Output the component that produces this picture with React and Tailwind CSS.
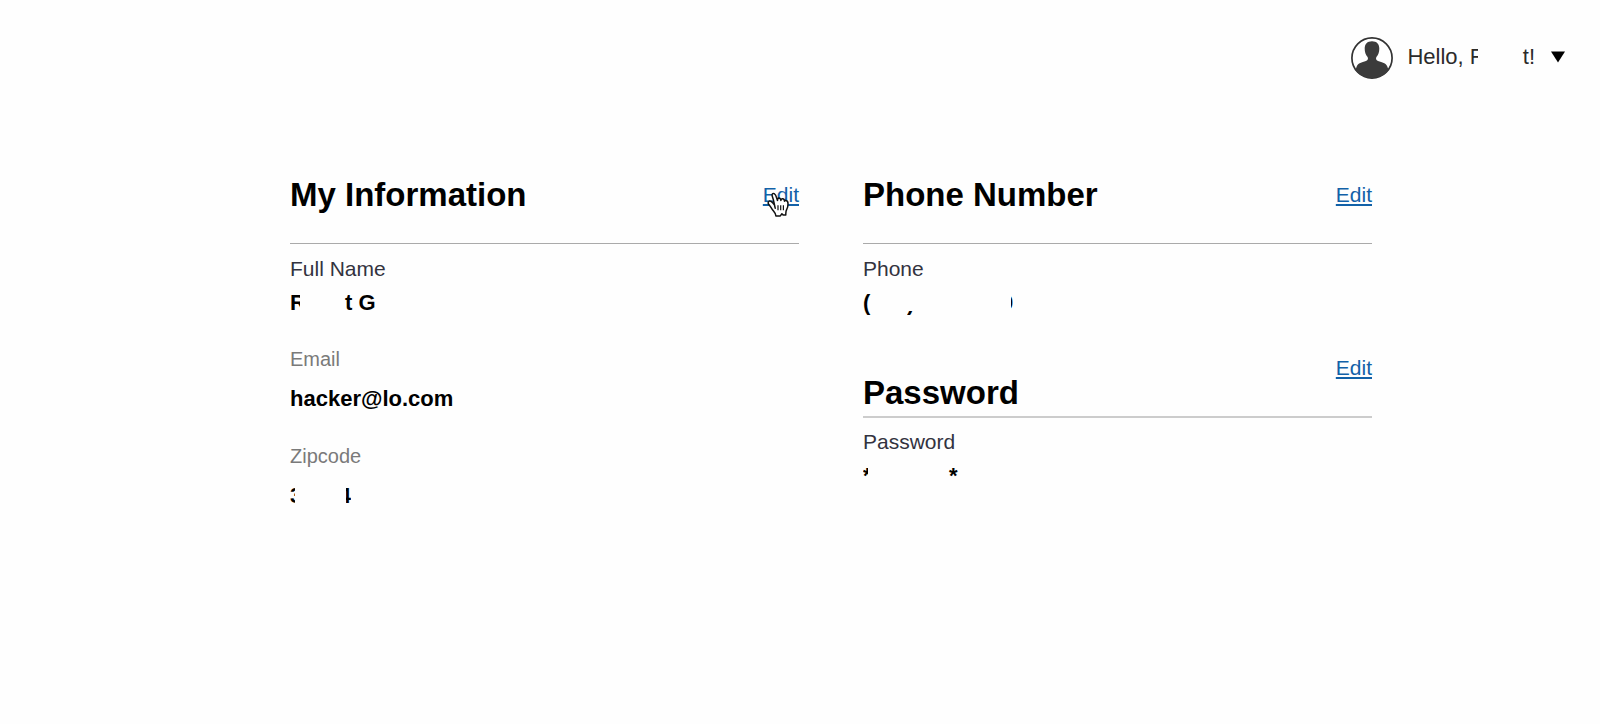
import React from "react";

function Part({ children, width, end = false }) {
  return (
    <span className={`flex shrink-0 overflow-hidden ${end ? "justify-end" : ""} ${width}`}>
      <span className="shrink-0">{children}</span>
    </span>
  );
}

function EditLink({ label, children }) {
  return (
    <span className="relative h-6">
      <a
        href="#edit"
        aria-label={label}
        className="block text-[21px] leading-6 text-[#1261a8] underline decoration-2 underline-offset-2"
      >
        Edit
      </a>
      {children}
    </span>
  );
}

function HandCursor() {
  return (
    <svg
      className="pointer-events-none absolute left-1 top-2 h-7 w-6"
      viewBox="0 0 24 28"
      aria-hidden="true"
    >
      <path
        d="M8.2 17.2 6.3 8.4Q5 4.6 5 3.8Q5.4 2 7.2 2.6Q8.8 3.4 9.6 6.7L10.5 9.4Q10.4 7 12 6.9Q13.7 7 13.9 9.5Q14.1 7.6 15.7 7.8Q17.4 8 17.5 10.3Q17.9 9.3 19.1 9.6Q21.1 10 21 12.9Q21 15.8 19.8 18.2Q18.6 20.4 18.8 23.9L16.3 24.1L14.9 22.7L13.3 24.9H8.9Q8.8 22.8 6.7 20.3Q5.1 18.4 3.8 16.1Q2.3 14.1 1.3 12.7Q.7 10.8 2.3 10.1Q4 9.7 5.9 12.1L7.5 14Z"
        fill="#fff"
        stroke="#111"
        strokeWidth="1.5"
        strokeLinejoin="round"
      />
      <path d="M11 14.3V19.2M13.7 14.3V19.2M16.4 14.3V19.2" stroke="#111" strokeWidth="1.2" />
    </svg>
  );
}

function Avatar() {
  return (
    <svg className="h-[42px] w-[42px]" viewBox="0 0 42 42" aria-hidden="true">
      <circle cx="21" cy="21" r="20.1" fill="#fff" stroke="#333" strokeWidth="1.7" />
      <path
        d="M21 4.2C16.3 4.2 13.7 7 13.7 11.4C13.7 15 14.6 17.7 16.6 20.1C17.4 21.9 17 23.3 15 24C10.6 25.4 7.2 26 5.7 29.4L4.4 33C8 38.2 14.2 41 21 41C27.8 41 34 38.2 37.6 33L36.3 29.4C34.8 26 31.4 25.4 27 24C25 23.3 24.6 21.9 25.4 20.1C27.4 17.7 28.3 15 28.3 11.4C28.3 7 25.7 4.2 21 4.2Z"
        fill="#3b3b3b"
      />
    </svg>
  );
}

const heading = "text-[33px] leading-10 font-bold text-black";
const label = "text-[21px] leading-6 text-[#33333f]";
const lightLabel = "text-[20px] leading-6 text-[#7a7a7a]";
const value = "flex text-[22px] leading-6 font-bold text-black";

export default function App() {
  return (
    <div className="min-h-screen bg-[#fefefe] font-['Liberation_Sans',Arial,sans-serif]">
      <header className="flex justify-end pt-[37px] pr-[35px]">
        <button type="button" className="flex items-center text-[22px] leading-6 text-[#2b2b2b]">
          <Avatar />
          <span className="flex pb-0.5 pl-[14px]">
            <span className="whitespace-pre">Hello, </span>
            <Part width="w-2">F</Part>
            <span className="pl-[45px]">t!</span>
          </span>
          <svg className="ml-4 mb-0.5 h-3 w-[14px]" viewBox="0 0 14 12" aria-hidden="true">
            <path d="M0 .5H14L7 11.5Z" fill="#000" />
          </svg>
        </button>
      </header>

      <main className="grid grid-cols-2 items-start gap-16 pt-24 pr-[228px] pl-[290px]">
        <section>
          <div className="flex items-start justify-between border-b border-[#aaa] pb-7">
            <h2 className={heading}>My Information</h2>
            <div className="pt-2">
              <EditLink label="Edit my information">
                <HandCursor />
              </EditLink>
            </div>
          </div>
          <dl>
            <dt className={`pt-[13px] ${label}`}>Full Name</dt>
            <dd className={`pt-[10px] ${value}`}>
              <Part width="w-[10px]">R</Part>
              <span className="pl-[45px]">t G</span>
            </dd>
            <dt className={`pt-8 ${lightLabel}`}>Email</dt>
            <dd className={`pt-4 ${value}`}>hacker@lo.com</dd>
            <dt className={`pt-[33px] ${lightLabel}`}>Zipcode</dt>
            <dd className={`pt-4 ${value}`}>
              <Part width="w-[5px]">3</Part>
              <span className="w-[51px]" />
              <Part width="w-[5px]" end>4</Part>
            </dd>
          </dl>
        </section>

        <div>
          <section>
            <div className="flex items-start justify-between border-b border-[#aaa] pb-7">
              <h2 className={heading}>Phone Number</h2>
              <div className="pt-2">
                <EditLink label="Edit phone number" />
              </div>
            </div>
            <dl>
              <dt className={`pt-[13px] ${label}`}>Phone</dt>
              <dd className={`pt-[10px] ${value}`}>
                <Part width="w-2">(</Part>
                <span className="w-9" />
                <span className="flex h-6 flex-col justify-end overflow-hidden">
                  <span className="h-1 overflow-hidden">
                    <span className="-mt-5 block">)</span>
                  </span>
                </span>
                <span className="w-[97px]" />
                <Part width="w-[2px]" end>0</Part>
              </dd>
            </dl>
          </section>
          <section className="pt-[41px]">
            <div className="flex items-start justify-between border-b-2 border-[#ccc] pb-[3px]">
              <h2 className={`pt-[17px] ${heading}`}>Password</h2>
              <EditLink label="Edit password" />
            </div>
            <dl>
              <dt className={`pt-3 ${label}`}>Password</dt>
              <dd className={`pt-[10px] ${value}`}>
                <Part width="w-[5px]">*</Part>
                <span className="pl-[81px]">*</span>
              </dd>
            </dl>
          </section>
        </div>
      </main>
    </div>
  );
}
